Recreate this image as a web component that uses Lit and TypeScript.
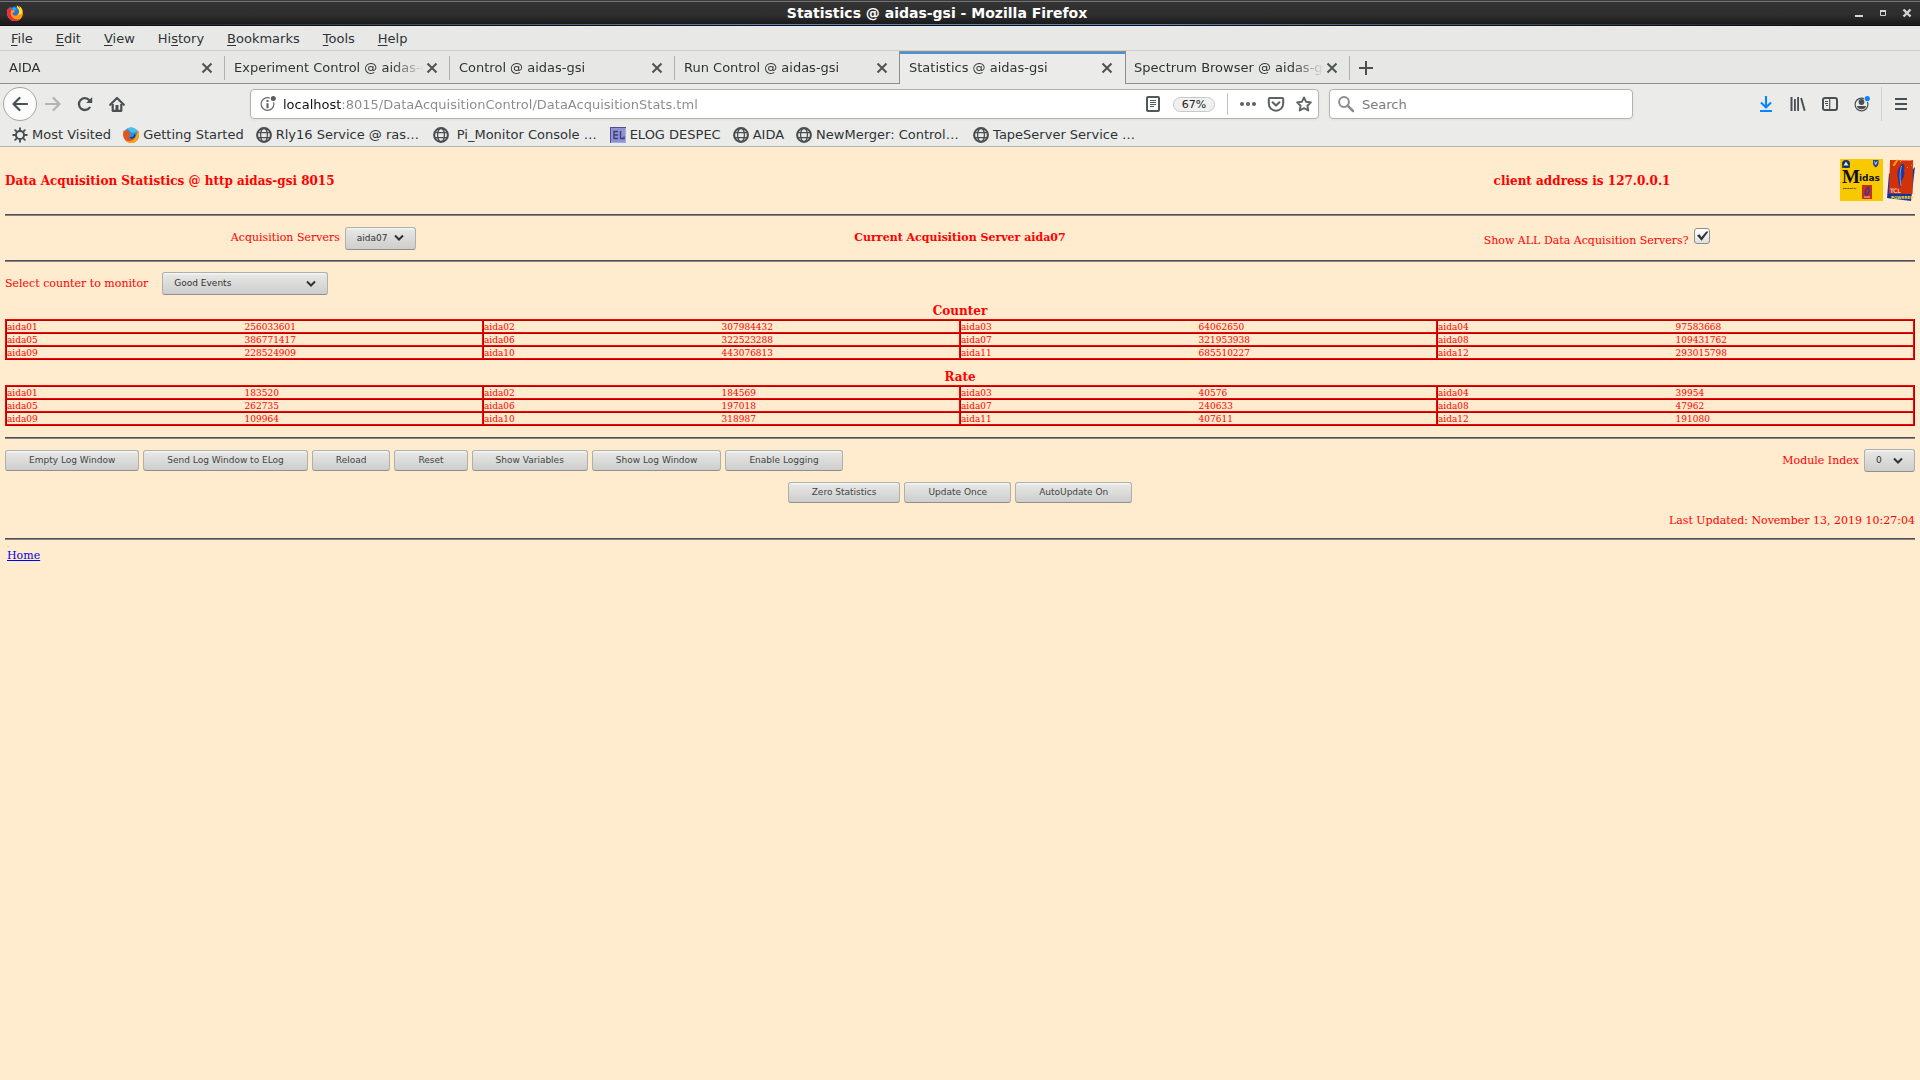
import { LitElement, html, svg, css } from "lit";
import { customElement } from "lit/decorators.js";

/* ---------- icon set (16px grid) ---------- */

const close = svg`<path d="M3.5 3.5 12.5 12.5M12.5 3.5 3.5 12.5" fill="none" stroke="#4c5356" stroke-width="2"/>`;
const globe = svg`<g fill="none" stroke="#4a4f52"><circle cx="8" cy="8" r="6.9" stroke-width="2.1"/><ellipse cx="8" cy="8" rx="3.4" ry="6.9" stroke-width="1.3"/><path d="M1.5 5.6h13M1.5 10.6h13" stroke-width="1.3"/></g>`;
const gear = svg`<g fill="none" stroke="#4a4f52"><circle cx="8" cy="8" r="4.1" stroke-width="2"/><path d="M8 1.2v2.4M8 12.4v2.4M1.2 8h2.4M12.4 8h2.4M3.2 3.2l1.7 1.7M11.1 11.1l1.7 1.7M3.2 12.8l1.7-1.7M11.1 4.9l1.7-1.7" stroke-width="1.9" stroke-linecap="round"/></g>`;
const firefox = svg`
  <circle cx="8" cy="8" r="6.6" fill="#2a6fe0"/>
  <path d="M5 3.2C7 2.2 9 3 9.6 4.4 8 4.2 7.4 5.4 6.6 6.4z" fill="#1fb4f5"/>
  <path d="M1 3.6C.1 5.4-.2 8 .4 10.2 1.400 13.700 4.500 16 8.200 16c4.400 0 7.800-3.500 7.800-8 0-3.200-1.900-5.800-4.200-7.200.8 1 1.100 1.700 1.200 2.600C12 2 10.800 1.200 9.800.2c.1 2.200 1.200 3.400 1.900 4.600.9 1.900.5 5.400-2.900 5.800-1.900.2-3.300-.9-3.300-2.100 0-.8 1.300-1 2.100-1.500.5-.3.4-.9-.4-1.300C6 5.300 5.100 5.200 4.600 4.800 3.400 4 3.200 2.600 3.300 1.900 2.500 2.300 2 3.100 1.800 3.800z" fill="#ff9a0a"/>
  <path d="M1 3.600C.1 5.400-.2 8 .4 10.200 1.400 13.700 4.500 16 8.200 16c2 0 3.600-.6 5-1.900-4 1.200-7.600-.5-9-3.400C3.100 8.500 3.800 6.500 4.600 4.800 3.400 4 3.200 2.600 3.300 1.900 2.500 2.300 2 3.100 1.800 3.800z" fill="#f0284a"/>
  <path d="M9.800.2c.1 2.200 1.200 3.400 1.900 4.600.9 1.900.5 4-1 5.200 4 .2 5-3 4.400-5.200C14.500 3 13 1.500 11.800.8c.8 1 1.100 1.700 1.200 2.600C12 2 10.800 1.200 9.800.2z" fill="#ffe226"/>`;
const firefoxOld = svg`
  <circle cx="8" cy="7.600" r="7.200" fill="#2f8fd6"/>
  <path d="M8 .4c3 0 5.600 1.600 6.600 4L9 6 4 1.600C5.200.8 6.600.4 8 .4z" fill="#46c0ef"/>
  <path d="M6 9.500c2 1 4.500.6 5-1.500.3-1.600 1.500-1 1.500.5 0 2-2 3.500-4.500 3.300z" fill="#11417e"/>
  <path d="M.9 3.200C0 5 -.2 8.200.5 10.300 1.700 13.800 4.700 16 8.100 16c4.600 0 7.900-3.700 7.900-8.300 0-1.900-.6-3.700-1.500-4.900.3 2-.1 3.300-.9 4.500-.3 3-2.700 5-5.500 4.600-1.800-.3-2.900-1.300-3-2.400.8.400 2.300.3 3-.6C6.500 8.700 5.700 7.700 5.700 7c.4-.7 1.500-.7 1.700-1.400-.1-.6-1.500-.6-2-1.200C5 3.700 5.400 3 5.700 2.700c-1.200.1-2 .6-2.600 1.200-.8-.1-1.500 0-2.200-.7z" fill="#e2541b"/>
  <path d="M2.500 12.500c3 3 9 2.300 11.100-5.200.8-1.200 1.200-2.500.9-4.500.9 1.200 1.500 3 1.500 4.900 0 4.600-3.300 8.300-7.900 8.300-2.200 0-4.200-1.300-5.600-3.500z" fill="#f9a51a"/>`;
const elog = svg`<path d="M0 0h16v16H0z" fill="#8f93d0"/><path d="M0.500 16V0.500H16" fill="none" stroke="#4b4e90"/><path d="M15.500 1v14.500H1" fill="none" stroke="#a5a8ea"/><g fill="none" stroke="#3b3e82"><path d="M8 4.500H4v7h4M4 8h4" stroke-width="1.400"/><path d="M10.500 4v7.500H14V9.500" stroke-width="1.400"/></g>`;

const icons = {
  back: svg`<path d="M15 8H1.800M7.500 2 1.500 8l6 6" fill="none" stroke="#4a4f52" stroke-width="2.200" stroke-linecap="round" stroke-linejoin="round"/>`,
  forward: svg`<path d="M1 8h13.200M8.500 2l6 6-6 6" fill="none" stroke="#b3b4b3" stroke-width="2.200" stroke-linecap="round" stroke-linejoin="round"/>`,
  reload: svg`<path d="M12.600 11.600A5.900 5.900 0 1 1 12.300 4.200" fill="none" stroke="#4a4f52" stroke-width="2.300" stroke-linecap="round"/><path d="M15.200 1v6H9.200z" fill="#4a4f52"/>`,
  home: svg`<path d="M1.200 8.800 8 2l6.800 6.800" fill="none" stroke="#4a4f52" stroke-width="2.200" stroke-linecap="round" stroke-linejoin="round"/><path d="M3.700 8v6.800h8.600V8" fill="none" stroke="#4a4f52" stroke-width="2.200" stroke-linejoin="round"/><path d="M6.500 9h3v6h-3z" fill="#4a4f52"/>`,
  info: svg`<circle cx="7.500" cy="8" r="6.400" fill="none" stroke="#6a6c6d" stroke-width="1.200"/><circle cx="13.300" cy="2.600" r="3.600" fill="#fff"/><circle cx="13.300" cy="2.600" r="2.500" fill="#5a5d5f"/><path d="M6.500 4h2v2h-2zM6.500 7.200h2v5h-2z" fill="#5a5d5f"/>`,
  reader: svg`<rect x="2" y="1" width="12" height="14" rx="1" fill="none" stroke="#555859" stroke-width="2"/><path d="M5 4.500h6M5 6.500h6M5 8.500h6M5 10.500h4" stroke="#555859" stroke-width="1"/>`,
  dots: svg`<g fill="#5f6162"><circle cx="2" cy="8" r="2"/><circle cx="8" cy="8" r="2"/><circle cx="14" cy="8" r="2"/></g>`,
  pocket: svg`<path d="M1.800 2h12.400q1 0 1 1v4.500a7.200 7.200 0 0 1-14.400 0V3q0-1 1-1z" fill="none" stroke="#5f6162" stroke-width="2"/><path d="M4.600 6.300 8 9.600l3.400-3.300" fill="none" stroke="#5f6162" stroke-width="2.100" stroke-linecap="round" stroke-linejoin="round"/>`,
  star: svg`<path d="M8 1.400l2.100 4.400 4.800.6-3.500 3.300.9 4.800L8 12.200l-4.300 2.300.9-4.800L1.100 6.400l4.800-.6z" fill="none" stroke="#5f6162" stroke-width="1.900" stroke-linejoin="round"/>`,
  search: svg`<circle cx="6" cy="6" r="4.900" fill="none" stroke="#8c8c8c" stroke-width="2"/><path d="M9.600 9.600 15 15" stroke="#8c8c8c" stroke-width="2.500" stroke-linecap="round"/>`,
  download: svg`<path d="M8 0v11M3 6.500 8 11.500 13 6.500" fill="none" stroke="#0a84ff" stroke-width="2.100" stroke-linejoin="round"/><path d="M2 14h12v2H2z" fill="#0a84ff"/>`,
  library: svg`<g fill="#4a4f52"><path d="M0.500 1h2v14h-2zM4 3h1.800v12H4zM7.200 1H9v14H7.200z"/><path d="M10.200 2.300l1.800-.5L15.600 14.500l-1.900.6z"/></g>`,
  sidebar: svg`<rect x="1" y="2" width="14" height="12" rx="2" fill="none" stroke="#4a4f52" stroke-width="2"/><path d="M7.700 2v12" stroke="#4a4f52" stroke-width="1.200"/><path d="M3 5.500h3M3 7.500h3M4 9.500h2" stroke="#4a4f52"/>`,
  account: svg`<circle cx="7.500" cy="8.500" r="6.400" fill="none" stroke="#4a4f52" stroke-width="1.200"/><circle cx="7.500" cy="6" r="2.900" fill="#4a4f52"/><path d="M2.800 10h9.400a5 5 0 0 1-9.400 0z" fill="#4a4f52"/><circle cx="13.300" cy="2.600" r="3.400" fill="#ebebe9"/><circle cx="13.300" cy="2.600" r="2.600" fill="#0a84ff"/>`,
  menu: svg`<path d="M2 3h12M2 8h12M2 13h12" stroke="#4a4f52" stroke-width="2"/>`,
  plus: svg`<path d="M8 1v14M1 8h14" stroke="#4a4f52" stroke-width="2"/>`,
  min: svg`<path d="M4 10h8v2H4z" fill="#d4d4d4"/>`,
  max: svg`<path d="M5.500 6.500h5v4h-5z" fill="none" stroke="#d4d4d4"/><path d="M5 5h6v2H5z" fill="#d4d4d4"/>`,
  shut: svg`<path d="M4.500 4.500l7 7M11.500 4.500l-7 7" stroke="#d4d4d4" stroke-width="2.400"/>`,
  chevron: svg`<path d="M4 5.500l4 4 4-4" fill="none" stroke="#2e3436" stroke-width="2"/>`,
  tick: svg`<path d="M3 7.500l2.600-1.300L7.400 9.200 12.300 3.600h2.200L7.600 12.800z" fill="#2e3436"/>`,
  close, globe, gear, firefox, firefoxOld, elog,
};

const icon = (name: keyof typeof icons) =>
  html`<svg class="icon" viewBox="0 0 16 16" aria-hidden="true">${icons[name]}</svg>`;

/* ---------- data ---------- */

const menus = [["", "F", "ile"], ["", "E", "dit"], ["", "V", "iew"], ["Hi", "s", "tory"], ["", "B", "ookmarks"], ["", "T", "ools"], ["", "H", "elp"]];

const tabs = ["AIDA", "Experiment Control @ aidas-gsi", "Control @ aidas-gsi", "Run Control @ aidas-gsi", "Statistics @ aidas-gsi", "Spectrum Browser @ aidas-gsi"];
const activeTab = 4;

const bookmarks: [keyof typeof icons, string][] = [
  ["gear", "Most Visited"],
  ["firefoxOld", "Getting Started"],
  ["globe", "Rly16 Service @ ras…"],
  ["globe", " Pi_Monitor Console …"],
  ["elog", "ELOG DESPEC"],
  ["globe", "AIDA"],
  ["globe", "NewMerger: Control…"],
  ["globe", "TapeServer Service …"],
];

const counters = ["256033601", "307984432", "64062650", "97583668", "386771417", "322523288", "321953938", "109431762", "228524909", "443076813", "685510227", "293015798"];
const rates = ["183520", "184569", "40576", "39954", "262735", "197018", "240633", "47962", "109964", "318987", "407611", "191080"];

const logButtons = ["Empty Log Window", "Send Log Window to ELog", "Reload", "Reset", "Show Variables", "Show Log Window", "Enable Logging"];
const statButtons = ["Zero Statistics", "Update Once", "AutoUpdate On"];

/* ---------- browser chrome ---------- */

@customElement("browser-chrome")
class BrowserChrome extends LitElement {
  static styles = css`
    :host { display: block; font: 13px/16px "DejaVu Sans", sans-serif; color: #2e3436; background: #ebebe9; }
    button, input { font: inherit; color: inherit; margin: 0; }
    button { display: grid; place-items: center; padding: 0; border: 0; background: none; }
    .icon { display: block; width: 16px; height: 16px; flex: none; overflow: visible; }

    .titlebar { display: grid; grid-template-columns: auto 1fr auto; align-items: center; box-sizing: border-box; height: 26px; padding: 0 5px 0 7px; border-bottom: 1px solid #101010; background: linear-gradient(90deg, #1b1d20 5%, #5f86b8 40%, #5f86b8 60%, #1b1d20 95%) bottom / 100% 1px no-repeat, linear-gradient(#3a3a3a 0 1px, #747474 1px 2px, #333 2px, #2e2e2e 60%, #181818); }
    .title { margin: 0; font-size: 14px; line-height: 16px; font-weight: bold; text-align: center; color: #fff; }
    .window-buttons { display: flex; gap: 8px; }

    .menubar { display: flex; align-items: center; box-sizing: border-box; height: 25px; padding: 1px 0 0 11px; gap: 23px; border-bottom: 1px solid #cdcdcb; background: #e8e8e6; }
    .menubar u { text-underline-offset: 2px; }

    .tabs { display: flex; align-items: stretch; height: 33px; background: linear-gradient(#8e8e8c, #8e8e8c) bottom / 100% 1px no-repeat, #e7e7e5; }
    .tab { display: flex; align-items: center; box-sizing: border-box; width: 225px; padding: 0 10px 0 9px; background: linear-gradient(#b0b0ae, #b0b0ae) right 5px / 1px 24px no-repeat; }
    .tab:nth-child(4) { background: none; }
    .tab.active { background: #ebebe9; border: solid #8e8e8c; border-width: 1px 1px 0; margin-left: -1px; width: 227px; margin-right: -1px; box-shadow: inset 0 2px #4a90d9; }
    .tab-label { flex: 1; overflow: hidden; white-space: nowrap; mask-image: linear-gradient(90deg, #000 calc(100% - 32px), transparent); }
    .new-tab { padding-left: 8px; }

    .nav { display: flex; align-items: center; height: 40px; padding: 0 11px 0 3px; }
    .back { box-sizing: border-box; width: 34px; height: 34px; border: 1px solid #a4a4a2; border-radius: 50%; background: #fcfcfc; }
    .tool { width: 32px; height: 32px; }
    .field { display: flex; align-items: center; box-sizing: border-box; height: 30px; border: 1px solid #b2b3ae; border-radius: 4px; background: #fff; box-shadow: 0 1px 3px #0000000d; }
    .field input { flex: 1; min-width: 0; border: 0; padding: 0; outline: 0; background: none; height: 20px; }
    .url { flex: 1052 1 0; margin-left: 117px; padding: 0 6px 0 9px; }
    .url .address { margin-left: 7px; background: linear-gradient(90deg, #111 59px, #8a8a8a 59px); background-clip: text; -webkit-background-clip: text; color: transparent; }
    .zoom { box-sizing: border-box; height: 15px; width: 42px; margin: 0 12px; border: 1px solid #c8c8c6; border-radius: 8px; background: #f0f0ef; font-size: 11px; line-height: 13px; color: #222; }
    .divider { width: 1px; height: 22px; margin-right: 12px; background: #c2c2c0; }
    .page-actions { display: flex; gap: 12px; }
    .search { flex: 286 1 0; margin: 0 117px 0 10px; padding: 0 8px; }
    .search input { margin-left: 8px; }
    .search input::placeholder { color: #7c7c7c; opacity: 1; }
    .nav-separator { width: 1px; height: 34px; margin: 0 11px 0 3px; background: #cfcfcd; }

    .bookmarks { display: flex; align-items: center; gap: 12px; box-sizing: border-box; height: 23px; padding: 0 12px 1px; border-bottom: 1px solid #b4b4b2; }
    .bookmark { display: flex; align-items: center; gap: 4px; color: inherit; text-decoration: none; white-space: pre; }
    .bookmark .shortened { min-width: 145px; }
  `;

  render() {
    return html`
      <header class="titlebar">
        ${icon("firefox")}
        <h1 class="title">Statistics @ aidas-gsi - Mozilla Firefox</h1>
        <div class="window-buttons">
          <button aria-label="Minimize">${icon("min")}</button>
          <button aria-label="Maximize">${icon("max")}</button>
          <button aria-label="Close window">${icon("shut")}</button>
        </div>
      </header>
      <nav class="menubar">${menus.map(([a, k, b]) => html`<button><span>${a}<u>${k}</u>${b}</span></button>`)}</nav>
      <div class="tabs">
        ${tabs.map((t, i) => html`
          <div class="tab ${i === activeTab ? "active" : ""}">
            <span class="tab-label">${t}</span>
            <button aria-label="Close tab">${icon("close")}</button>
          </div>`)}
        <button class="new-tab" aria-label="New tab">${icon("plus")}</button>
      </div>
      <div class="nav">
        <button class="back" aria-label="Back">${icon("back")}</button>
        <button class="tool" aria-label="Forward">${icon("forward")}</button>
        <button class="tool" aria-label="Reload">${icon("reload")}</button>
        <button class="tool" aria-label="Home">${icon("home")}</button>
        <div class="field url">
          ${icon("info")}
          <input class="address" aria-label="Address" value="localhost:8015/DataAcquisitionControl/DataAcquisitionStats.tml" />
          ${icon("reader")}
          <button class="zoom">67%</button>
          <span class="divider"></span>
          <div class="page-actions">
            <button aria-label="Page actions">${icon("dots")}</button>
            <button aria-label="Save to Pocket">${icon("pocket")}</button>
            <button aria-label="Bookmark this page">${icon("star")}</button>
          </div>
        </div>
        <div class="field search">
          ${icon("search")}
          <input aria-label="Search" placeholder="Search" />
        </div>
        <button class="tool" aria-label="Downloads">${icon("download")}</button>
        <button class="tool" aria-label="Library">${icon("library")}</button>
        <button class="tool" aria-label="Sidebars">${icon("sidebar")}</button>
        <button class="tool" aria-label="Account">${icon("account")}</button>
        <span class="nav-separator"></span>
        <button class="menu" aria-label="Open menu">${icon("menu")}</button>
      </div>
      <nav class="bookmarks">
        ${bookmarks.map(([i, label]) => html`<a class="bookmark" href="#">${icon(i)}<span class=${label.endsWith("…") ? "shortened" : ""}>${label}</span></a>`)}
      </nav>
    `;
  }
}

/* ---------- statistics page ---------- */

@customElement("statistics-page")
class StatisticsPage extends LitElement {
  static styles = css`
    :host { display: block; padding: 0 5px; font: 11px/14px "DejaVu Serif", serif; color: #f00; }
    h2, p { margin: 0; }
    h2 { font-size: 12px; line-height: 16px; font-weight: bold; }
    hr { height: 1px; margin: 0; border: 0; border-top: 1px solid #4f4f55; background: #858588; }
    .icon { display: block; width: 16px; height: 16px; }

    .heading { display: grid; grid-template-columns: 8fr 3fr auto; align-items: center; height: 67px; }
    .heading .client { text-align: center; }
    .logos { display: flex; gap: 4px; padding: 0 0 2px 9px; }
    .midas { width: 43px; height: 42px; }
    .tcl { width: 28px; height: 42px; }

    .servers { display: grid; grid-template-columns: repeat(3, 1fr); place-items: center; height: 44px; }
    .servers strong { font-size: 11px; }
    .pair { display: flex; align-items: center; gap: 5px; }

    .select { display: grid; align-items: center; }
    .select > * { grid-area: 1 / 1; }
    .select .icon { justify-self: end; margin-right: 9px; pointer-events: none; }
    select, button { box-sizing: border-box; margin: 0; border: 1px solid #aeb0ac; border-bottom-color: #8e908d; border-radius: 3px; background: linear-gradient(#f4f4f3 0 1px, #e6e6e5 2px, #cdcdcc); font: 9px/11px "DejaVu Sans", sans-serif; color: #2e3436; }
    select { appearance: none; height: 23px; padding: 0 11px; }
    button { height: 21px; padding: 0 23px; color: #3e4446; }
    .server-select { width: 71px; }
    .counter-select { width: 166px; }
    .index-select { width: 51px; }

    .check { display: grid; }
    .check > * { grid-area: 1 / 1; }
    .check .icon { pointer-events: none; }
    input { appearance: none; box-sizing: border-box; width: 16px; height: 16px; margin: 0; border: 1px solid #8c8e8b; border-radius: 3px; background: linear-gradient(#fff, #dededd); }
    .show-all { align-items: flex-start; }
    .show-all label { padding-top: 6px; }

    .monitor { gap: 14px; margin: 10px 0 8px; }
    table { width: 100%; table-layout: fixed; border-collapse: separate; border-spacing: 0; margin-bottom: 9px; border: 1px solid; border-color: #f00 #b40000 #b40000 #f00; }
    caption { font-size: 12px; line-height: 16px; font-weight: bold; }
    td { height: 10px; padding: 1px 0 0; border: solid #f00; border-width: 1px 0; border-top-color: #b40000; font-size: 9px; line-height: 10px; }
    td.name { border-left: 1px solid #b40000; }
    td.value { border-right: 1px solid #f00; }
    table + hr { margin-top: 11px; }

    .actions { display: flex; align-items: center; justify-content: space-between; margin-top: 10px; }
    .buttons { display: flex; gap: 4px; }
    .stat-buttons { justify-content: center; margin: 10px 0 11px; }
    .updated { text-align: right; margin-bottom: 10px; }
    .footer { padding: 0 2px 9px; }
    .mark { display: block; font-size: 6px; line-height: 9px; color: #555; }
    .footer a { color: #00e; }
  `;

  private table(title: string, values: string[]) {
    const rows = [0, 4, 8].map((start) => values.slice(start, start + 4).map((v, i) => [`aida${String(start + i + 1).padStart(2, "0")}`, v]));
    return html`
      <table>
        <caption>${title}</caption>
        <tbody>
          ${rows.map((row) => html`<tr>${row.map(([n, v]) => html`<td class="name">${n}</td><td class="value">${v}</td>`)}</tr>`)}
        </tbody>
      </table>`;
  }

  private select(id: string, cls: string, value: string) {
    return html`<span class="select"><select id=${id} class=${cls}><option>${value}</option></select>${icon("chevron")}</span>`;
  }

  render() {
    return html`
      <header class="heading">
        <h2>Data Acquisition Statistics @ http aidas-gsi 8015</h2>
        <h2 class="client">client address is 127.0.0.1</h2>
        <div class="logos">
          <svg class="midas" viewBox="0 0 43 42" role="img" aria-label="Midas">
            <path d="M0 0h43v42H0z" fill="#f9c900"/>
            <circle cx="6" cy="5" r="4" fill="#18335c"/><path d="M3.500 6.500 6 2.500l2.500 4z" fill="#dce8f4"/><path d="M2 8h8" stroke="#18335c" stroke-width="1.500"/>
            <path d="M33 1h5.500v4q-.5 2.500-2.700 3.500Q33.500 7.500 33 5z" fill="#29468c"/><path d="M34.500 2.500l1.200 3 1.300-3" fill="none" stroke="#c8d4ee" stroke-width="1"/>
            <text x="2" y="23.500" font-family="Liberation Serif, serif" font-weight="bold" font-size="19" fill="#111">M</text>
            <text x="19" y="22" font-family="DejaVu Sans, sans-serif" font-weight="bold" font-size="9" fill="#111">idas</text>
            <text x="3" y="30" font-family="DejaVu Sans, sans-serif" font-weight="bold" font-size="2" fill="#222">powered by</text>
            <path d="M22 26h10v14H22z" fill="#d02c10"/><path d="M28 28c-3 3-3 7-1.500 10M28.500 28c1 3 .5 6-1.500 8" fill="none" stroke="#2c3c9c" stroke-width="1.500"/><path d="M24 38h6" stroke="#f0d0b0" stroke-width="1"/>
          </svg>
          <svg class="tcl" viewBox="0 0 28 42" role="img" aria-label="Tcl Powered">
            <path d="M2 14 0 39l24 3 1-8 3-26-3 3-3 22z" fill="#1c38a0"/>
            <path d="M3 1l20 .5L26 1l-.5 34L2 34.500z" fill="#d23208"/>
            <path d="M6 6l4-5h1L7 7zM13 3l2-2M20 9l1-1M24 7l1-1" fill="#f0a010" stroke="#f0a010"/>
            <path d="M16 4.500c-5 3-6.500 9-5 15 .3 4 .5 6 2 10l1.500-8c3-3 3.500-7 2.500-10 .8-3 .7-5-1-7z" fill="#24389c"/>
            <path d="M14.500 7c-1.500 5-2 11-.5 20" fill="none" stroke="#8e98d4" stroke-width="1"/>
            <text x="3" y="33.500" font-family="DejaVu Sans, sans-serif" font-size="6" fill="#fff">TCL</text>
            <path d="M1 35.500h23v5L1 39z" fill="#10309c"/>
            <text x="4" y="40" font-family="DejaVu Sans, sans-serif" font-weight="bold" font-size="4" fill="#f4e020">POWERED</text>
          </svg>
        </div>
      </header>
      <hr />
      <section class="servers">
        <div class="pair"><label for="server">Acquisition Servers</label>${this.select("server", "server-select", "aida07")}</div>
        <strong>Current Acquisition Server aida07</strong>
        <div class="pair show-all">
          <label for="all">Show ALL Data Acquisition Servers?</label>
          <span class="check"><input id="all" type="checkbox" checked />${icon("tick")}</span>
        </div>
      </section>
      <hr />
      <div class="pair monitor"><label for="counter">Select counter to monitor</label>${this.select("counter", "counter-select", "Good Events")}</div>
      ${this.table("Counter", counters)}
      ${this.table("Rate", rates)}
      <hr />
      <div class="actions">
        <div class="buttons">${logButtons.map((b) => html`<button>${b}</button>`)}</div>
        <div class="pair"><label for="index">Module Index</label>${this.select("index", "index-select", "0")}</div>
      </div>
      <div class="buttons stat-buttons">${statButtons.map((b) => html`<button>${b}</button>`)}</div>
      <p class="updated">Last Updated: November 13, 2019 10:27:04</p>
      <hr />
      <footer class="footer"><span class="mark">.</span><a href="#">Home</a></footer>
    `;
  }
}

@customElement("app-root")
class AppRoot extends LitElement {
  static styles = css`
    :host { display: block; min-height: 100vh; background: #ffebcd; }
  `;

  render() {
    return html`<browser-chrome></browser-chrome><statistics-page></statistics-page>`;
  }
}
